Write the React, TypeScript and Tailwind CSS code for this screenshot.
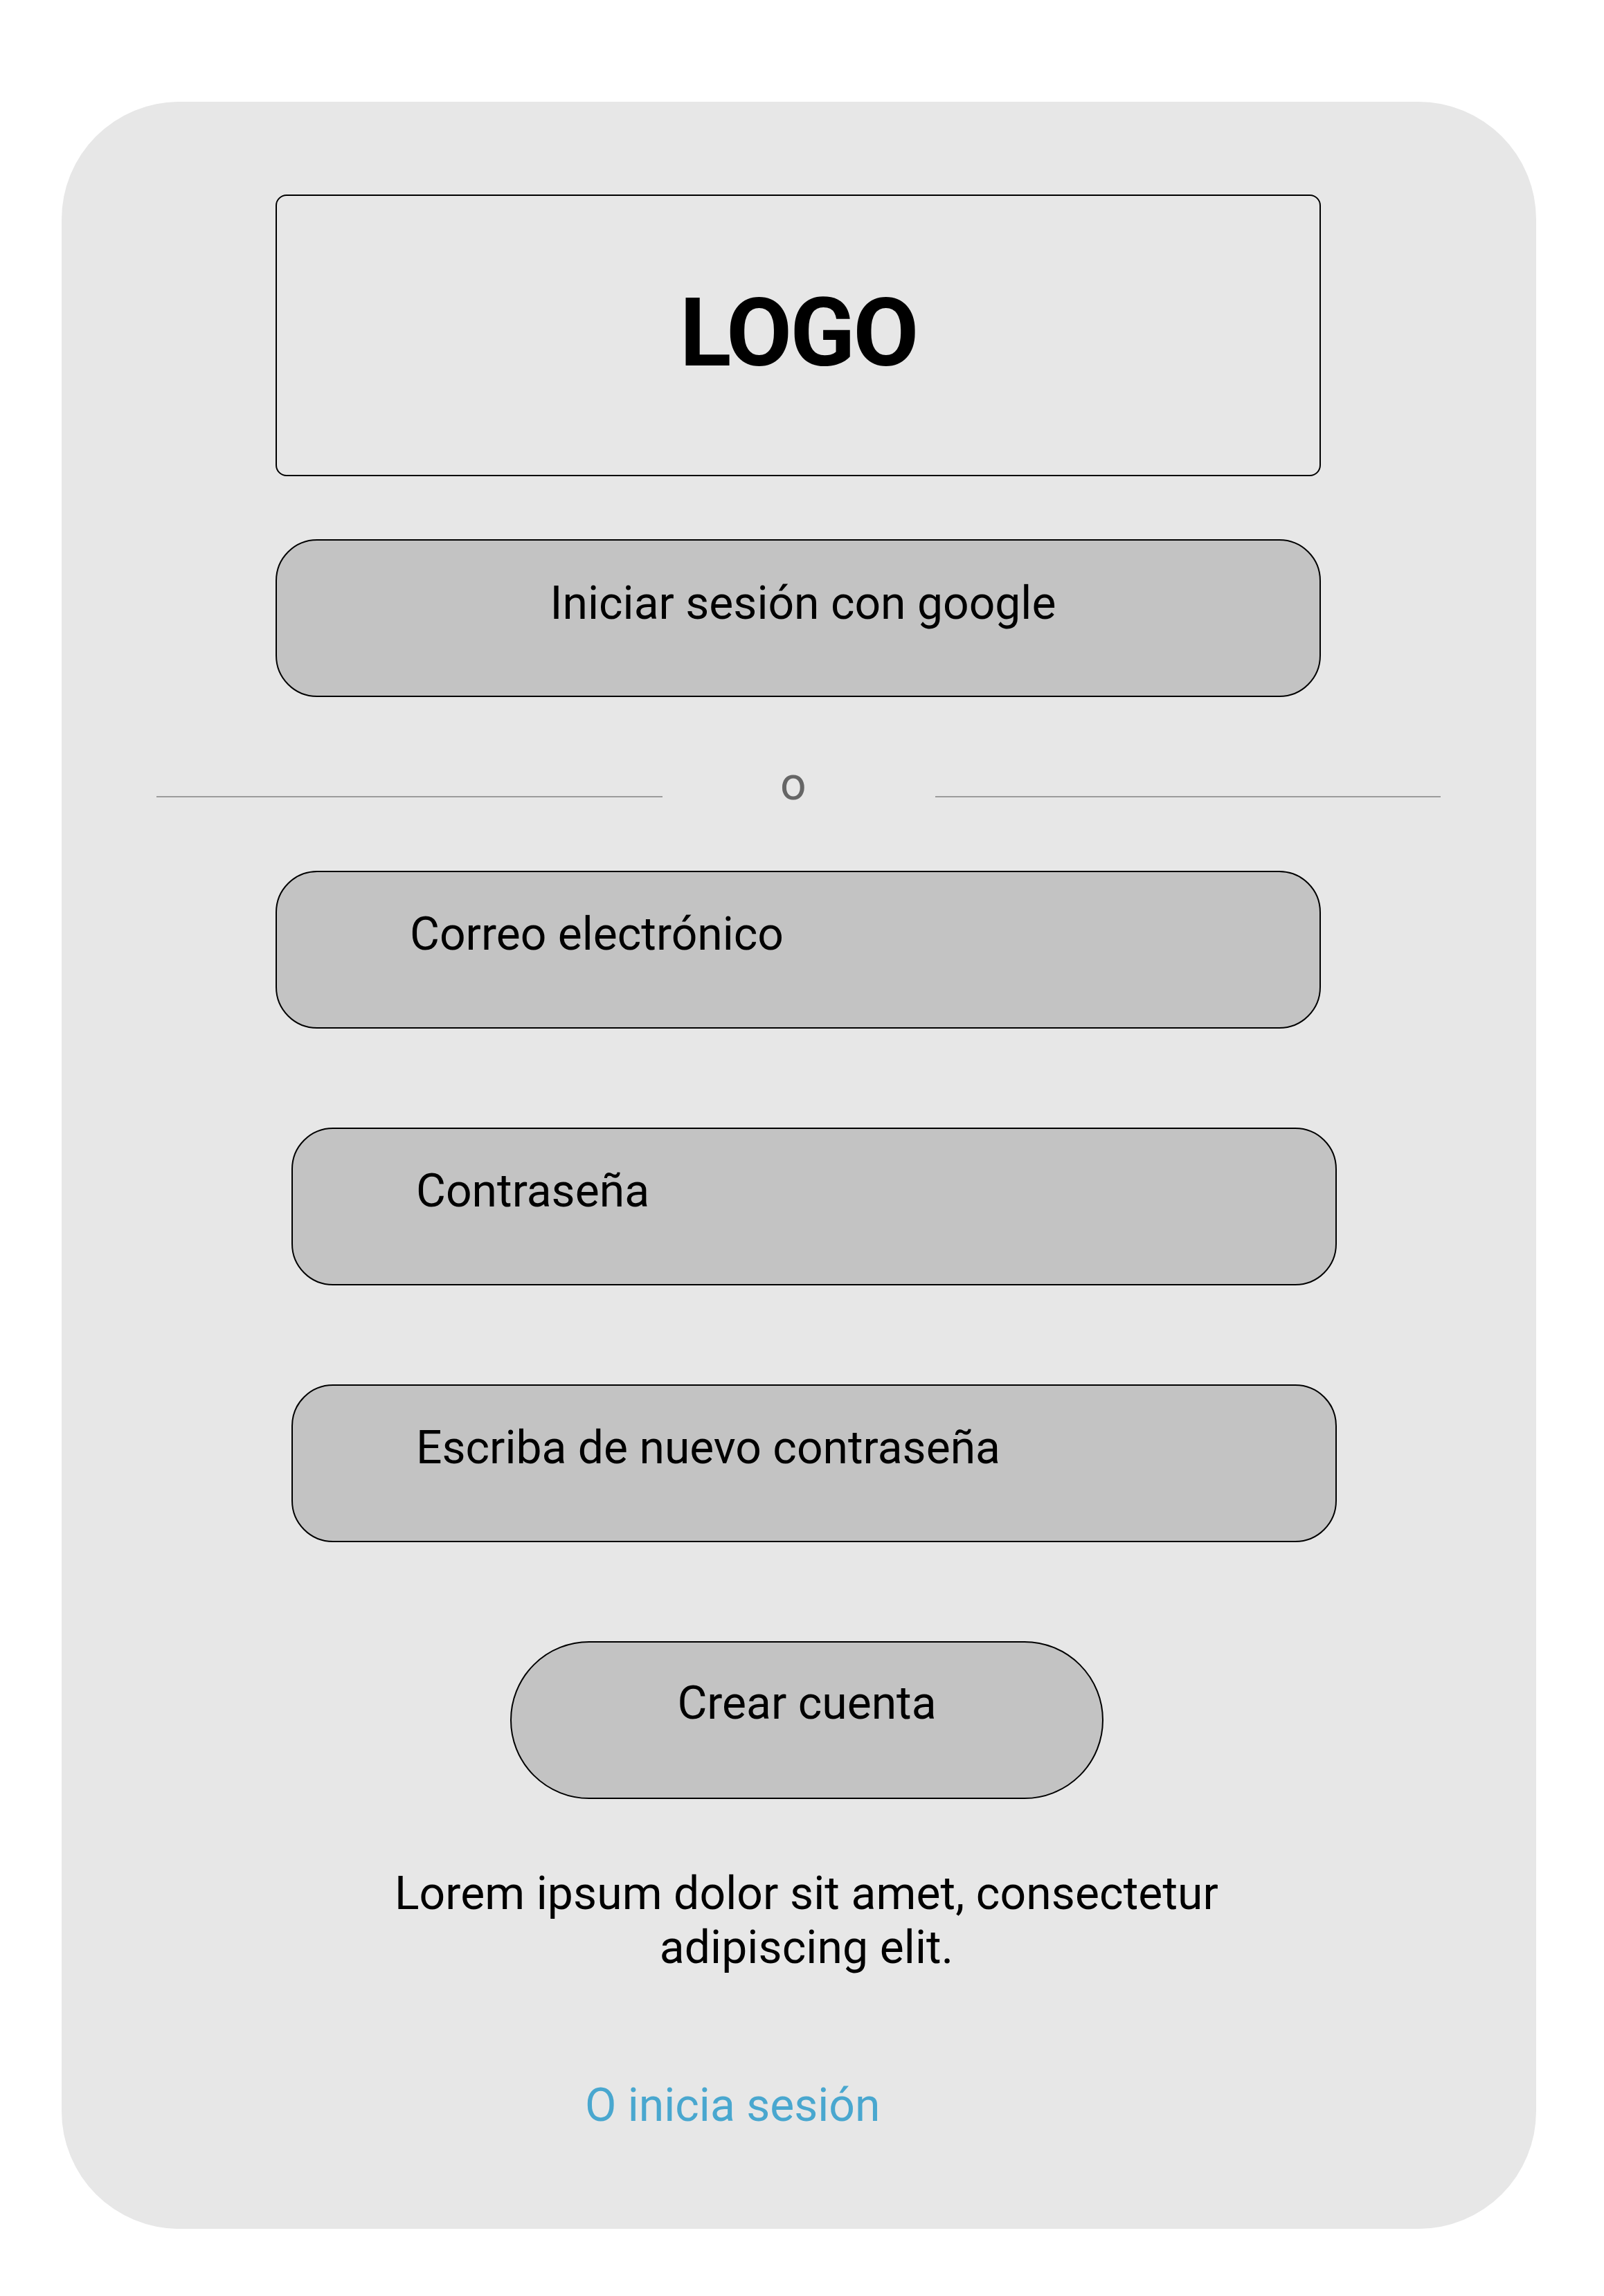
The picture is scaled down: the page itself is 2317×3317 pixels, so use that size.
import { useState } from 'react';

type Field = {
  id: string;
  label: string;
  offset: string;
};

const fields: Field[] = [
  { id: 'email', label: 'Correo electrónico', offset: 'ml-[309px] mt-[87px] pl-[192px]' },
  { id: 'password', label: 'Contraseña', offset: 'ml-[332px] mt-[143px] pl-[178px]' },
  { id: 'repeat', label: 'Escriba de nuevo contraseña', offset: 'ml-[332px] mt-[143px] pl-[178px]' },
];

export default function App() {
  const [values, setValues] = useState<Record<string, string>>({});

  return (
    <div className="w-[2317px] h-[3317px] bg-white pt-[147px] pl-[89px] font-['Roboto',sans-serif]">
      <div className="w-[2130px] h-[3073px] bg-[#e7e7e7] rounded-[170px] pt-[134px] flex flex-col">
        {/* logo */}
        <div className="ml-[309px] w-[1510px] h-[407px] border-2 border-black rounded-[16px] flex items-center justify-center">
          <span className="text-[138px] leading-[164px] font-bold text-black tracking-[-3px] -mt-[8px]">LOGO</span>
        </div>

        <button className="ml-[309px] mt-[91px] w-[1510px] h-[228px] bg-[#c3c3c3] border-2 border-black rounded-[60px] pt-[52px] pl-[14px] flex justify-center items-start text-[66px] leading-[77px] text-black self-start">
          Iniciar sesión con google
        </button>

        {/* divider */}
        <div className="ml-[137px] mt-[87px] flex items-start h-[77px]">
          <div className="w-[731px] h-[2px] mt-[56px] bg-[#9c9c9c]" />
          <span className="ml-[170px] text-[66px] leading-[77px] text-[#666666]">o</span>
          <div className="ml-[186px] w-[730px] h-[2px] mt-[56px] bg-[#9c9c9c]" />
        </div>

        {fields.map((f) => (
          <label
            key={f.id}
            className={`${f.offset} w-[1510px] h-[228px] bg-[#c3c3c3] border-2 border-black rounded-[60px] pt-[51px] block`}
          >
            <input
              value={values[f.id] ?? ''}
              onChange={(e) => setValues({ ...values, [f.id]: e.target.value })}
              placeholder={f.label}
              type={f.id === 'email' ? 'email' : 'password'}
              className="w-[1100px] bg-transparent outline-none text-[66px] leading-[77px] h-[77px] text-black placeholder:text-black"
            />
          </label>
        ))}

        <button className="ml-[648px] mt-[143px] w-[857px] h-[228px] bg-[#c3c3c3] border-2 border-black rounded-full pt-[49px] flex justify-center items-start text-[66px] leading-[77px] text-black self-start">
          Crear cuenta
        </button>

        <p className="ml-[426px] mt-[98px] w-[1300px] text-center text-[66px] leading-[78px] tracking-[0.1px] text-black">
          Lorem ipsum dolor sit amet, consectetur adipiscing elit.
        </p>

        <a href="#" className="ml-[756px] mt-[150px] text-[66px] leading-[77px] text-[#49a7cf] self-start">
          O inicia sesión
        </a>
      </div>
    </div>
  );
}
